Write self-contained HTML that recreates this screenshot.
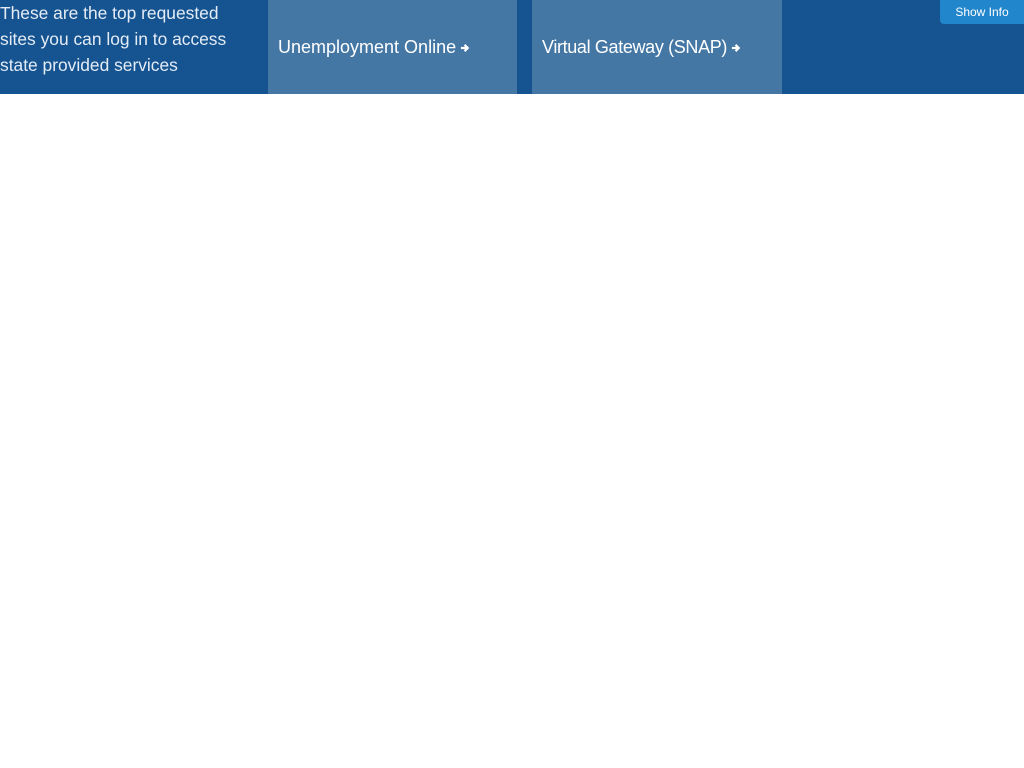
<!DOCTYPE html>
<html><head><style>
body{margin:0;background:#fff;font-family:"Liberation Sans",sans-serif;}
.bar{position:absolute;left:0;top:0;width:1024px;height:94px;background:#165491;}
.intro{position:absolute;left:0;top:0;width:250px;color:#e4ecf5;font-size:17.4px;line-height:26px;}
.tile{position:absolute;top:0;height:94px;background:#4577a5;color:#fff;font-size:18px;line-height:94px;}
.tile span{margin-left:10px;}
.arr{display:inline-block;vertical-align:middle;margin-left:4px;}
.btn{position:absolute;left:940px;top:0;width:84px;height:24px;background:#2286cc;color:#fff;font-size:12px;line-height:24px;text-align:center;border-bottom-left-radius:4px;}
</style></head><body>
<div class="bar"></div>
<div class="intro">These are the top requested sites you can log in to access state provided services</div>
<div class="tile" style="left:268px;width:249px"><span>Unemployment Online<svg class="arr" width="10" height="10" viewBox="0 0 11 11"><path d="M1 5.5H8M5 2L8.5 5.5L5 9" stroke="#fff" stroke-width="2.4" fill="none"/></svg></span></div>
<div class="tile" style="left:532px;width:250px"><span style="letter-spacing:-0.35px">Virtual Gateway (SNAP)<svg class="arr" width="10" height="10" viewBox="0 0 11 11"><path d="M1 5.5H8M5 2L8.5 5.5L5 9" stroke="#fff" stroke-width="2.4" fill="none"/></svg></span></div>
<div class="btn">Show Info</div>
</body></html>
